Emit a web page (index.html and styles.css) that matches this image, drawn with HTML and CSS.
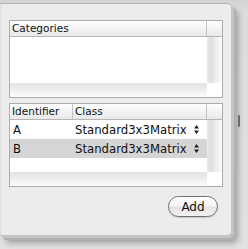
FILE: index.html
```html
<!DOCTYPE html>
<html lang="en">
<head>
  <meta charset="UTF-8" />
  <title>Categories</title>
  <link rel="stylesheet" href="styles.css">
</head>
<body>

  <div class="window">

    <!-- CATEGORIES -->
    <div class="table">
      <div class="thead">
        <div class="th fill">Categories</div>
        <div class="th corner"></div>
      </div>
      <div class="tbody short">
        <div class="rows"></div>
        <div class="vtrack"></div>
      </div>
      <div class="tfoot">
        <div class="htrack"></div>
        <div class="corner-box"></div>
      </div>
    </div>

    <!-- IDENTIFIERS -->
    <div class="table">
      <div class="thead">
        <div class="th ident">Identifier</div>
        <div class="th fill">Class</div>
        <div class="th corner"></div>
      </div>
      <div class="tbody tall">
        <div class="rows">
          <div class="row">
            <div class="td ident">A</div>
            <div class="td fill">Standard3x3Matrix <svg class="stepper" width="5" height="9" viewBox="0 0 5 9"><path d="M2.5 0 L5 3.5 L0 3.5 Z M0 5.5 L5 5.5 L2.5 9 Z" fill="#222"/></svg></div>
          </div>
          <div class="row selected">
            <div class="td ident">B</div>
            <div class="td fill">Standard3x3Matrix <svg class="stepper" width="5" height="9" viewBox="0 0 5 9"><path d="M2.5 0 L5 3.5 L0 3.5 Z M0 5.5 L5 5.5 L2.5 9 Z" fill="#222"/></svg></div>
          </div>
        </div>
        <div class="vtrack"></div>
      </div>
      <div class="tfoot">
        <div class="htrack"></div>
        <div class="corner-box"></div>
      </div>
    </div>

    <div class="actions">
      <button class="add-btn">Add</button>
    </div>

  </div>

  <div class="splitter"></div>

</body>
</html>
```

FILE: styles.css
```css
body { margin: 0; width: 248px; height: 249px; overflow: hidden; position: relative; font-family: "DejaVu Sans", sans-serif; background: linear-gradient(#d2d2d2, #dcdcdc 10px, #e2e2e2); }
.window { box-sizing: border-box; width: 232px; height: 233px; margin-top: 3px; padding: 16px 0 0 9px; background: #ececec; border-top: 1px solid #b2b2b2; border-right: 1px solid #c6c6c6; border-bottom: 1px solid #c6c6c6; border-radius: 0 5px 5px 0; box-shadow: inset 3px 0 3px -2px rgba(0,0,0,0.08), 2px 2px 0 #c4c4c4, 4px 4px 0 #b0b0b0, 6px 7px 6px rgba(0,0,0,0.3); }

.table { box-sizing: border-box; width: 214px; border: 1px solid #acacac; background: #fff; }
.table + .table { margin-top: 5px; }
.thead { display: flex; height: 15px; border-bottom: 1px solid #b6b6b6; background: linear-gradient(#ffffff, #f3f3f3 50%, #e9e9e9); }
.th { box-sizing: border-box; font-size: 10.5px; line-height: 15px; padding-left: 2px; color: #111; border-right: 1px solid #c2c2c2; }
.th.corner { width: 15px; border-right: none; }
.ident { width: 63px; flex: none; }
.fill { flex: 1; }

.tbody { display: flex; }
.tbody.short { height: 46px; }
.tbody.tall { height: 52px; }
.rows { flex: 1; }
.vtrack { width: 15px; background: linear-gradient(to right, #ececec, #dedede 25%, #f0f0f0 70%, #fcfcfc); }
.tfoot { display: flex; height: 14px; }
.htrack { flex: 1; background: linear-gradient(#e3e3e3, #ececec 40%, #fdfdfd); }
.corner-box { width: 15px; background: #fff; }

.row { display: flex; height: 19px; align-items: center; }
.row.selected { background: #d5d5d5; }
.td { box-sizing: border-box; font-size: 11.7px; color: #111; }
.td.ident { padding-left: 3px; }
.td.fill { padding-left: 2px; display: flex; align-items: center; gap: 7px; }
.stepper { flex: none; }

.actions { width: 214px; display: flex; justify-content: flex-end; padding-right: 5px; box-sizing: border-box; margin-top: 9px; }
.add-btn { width: 50px; height: 21px; padding: 0; font-family: "DejaVu Sans", sans-serif; font-size: 12px; color: #111; border: 1px solid #707070; border-radius: 11px; background: linear-gradient(#ffffff, #f4f4f4 45%, #e4e4e4 55%, #f2f2f2); box-shadow: 0 1px 1px rgba(0,0,0,0.15); }

.splitter { position: absolute; left: 238px; top: 115px; width: 2px; height: 12px; background: #6a6a6a; border-radius: 1px; }
```
